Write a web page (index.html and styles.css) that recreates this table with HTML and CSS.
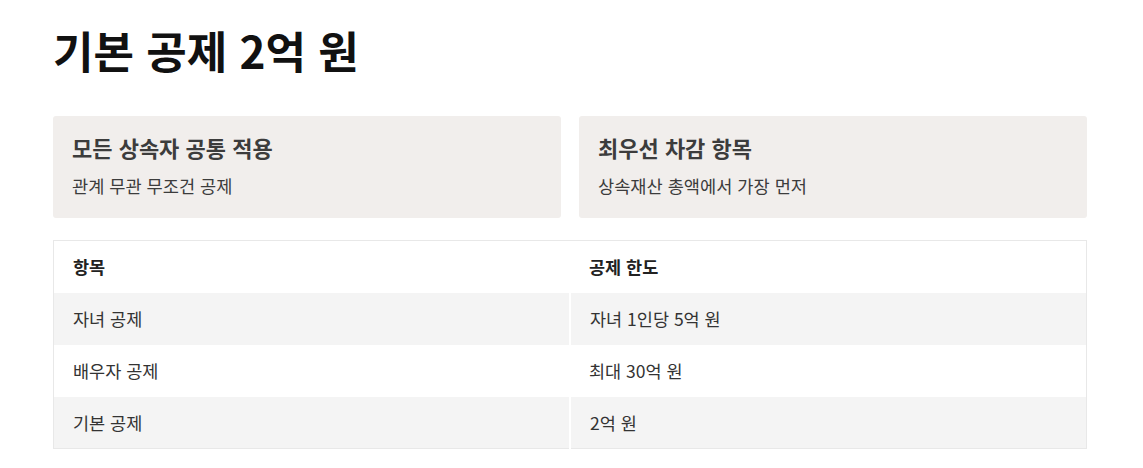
FILE: index.html
```html
<!DOCTYPE html>
<html lang="ko">
<head>
<meta charset="utf-8">
<link rel="stylesheet" href="styles.css">
</head>
<body>
<main class="page">
  <h1 class="title">기본 공제 2억 원</h1>
  <section class="cards">
    <div class="card">
      <div class="card-title">모든 상속자 공통 적용</div>
      <div class="card-sub">관계 무관 무조건 공제</div>
    </div>
    <div class="card">
      <div class="card-title">최우선 차감 항목</div>
      <div class="card-sub">상속재산 총액에서 가장 먼저</div>
    </div>
  </section>
  <table class="table">
    <thead>
      <tr><th>항목</th><th>공제 한도</th></tr>
    </thead>
    <tbody>
      <tr><td>자녀 공제</td><td>자녀 1인당 5억 원</td></tr>
      <tr><td>배우자 공제</td><td>최대 30억 원</td></tr>
      <tr><td>기본 공제</td><td>2억 원</td></tr>
    </tbody>
  </table>
</main>
</body>
</html>
```

FILE: styles.css
```css
* { box-sizing: border-box; }
html, body { margin: 0; padding: 0; background: #ffffff; }
body {
  font-family: "Noto Sans CJK KR", Inter, "Noto Sans", sans-serif;
  color: #222;
}
.page {
  padding: 22px 56px 0 53px;
  display: flex;
  flex-direction: column;
}
.title {
  margin: 0;
  font-size: 44px;
  line-height: 56px;
  font-weight: 700;
  color: #111;
}
.cards {
  margin-top: 38px;
  display: grid;
  grid-template-columns: 1fr 1fr;
  gap: 18px;
}
.card {
  background: #f1eeec;
  border-radius: 3px;
  height: 102px;
  padding: 17px 19px;
  display: flex;
  flex-direction: column;
}
.card-title {
  font-size: 22px;
  line-height: 28px;
  font-weight: 700;
  color: #3c3c3c;
}
.card-sub {
  margin-top: 13px;
  font-size: 17.6px;
  line-height: 24px;
  color: #3c3c3c;
}
.table {
  margin-top: 22px;
  width: 100%;
  border-collapse: collapse;
  border: 1px solid #e8e8e8;
  border-radius: 3px;
  font-size: 17.5px;
  color: #333;
}
.table th, .table td {
  text-align: left;
  height: 52px;
  padding: 0 19px;
  width: 50%;
}
.table th {
  font-weight: 700;
  color: #222;
}
.table tbody tr:nth-child(odd) { background: #f4f4f4; }
.table tbody tr:nth-child(odd) td:first-child { border-right: 2px solid #ffffff; }
```
